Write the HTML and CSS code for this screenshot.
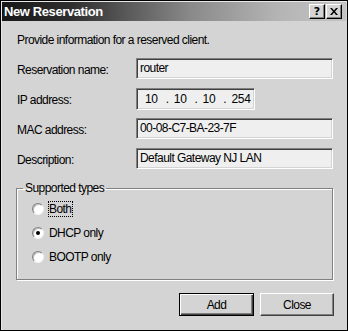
FILE: index.html
```html
<!DOCTYPE html>
<html lang="en">
<head>
    <meta charset="UTF-8">
    <title>New Reservation</title>
    <link rel="stylesheet" href="styles.css">
</head>
<body>
    <div class="window">
        <div class="title-bar">
            <div class="title-text">New Reservation</div>
            <div class="title-buttons">
                <span class="caption-btn">?</span>
                <span class="caption-btn close-btn">
                    <svg width="8" height="7" viewBox="0 0 8 7"><path d="M0 0h2l2 2.5L6 0h2L5 3.5 8 7H6L4 4.5 2 7H0l3-3.5z" fill="#000"/></svg>
                </span>
            </div>
        </div>

        <div class="content">
            <p class="intro">Provide information for a reserved client.</p>

            <div class="form-row">
                <span class="label">Reservation name:</span>
                <div class="field">router</div>
            </div>
            <div class="form-row">
                <span class="label">IP address:</span>
                <div class="field ip-field">
                    <span>10</span><span class="dot">.</span>
                    <span>10</span><span class="dot">.</span>
                    <span>10</span><span class="dot">.</span>
                    <span>254</span>
                </div>
            </div>
            <div class="form-row">
                <span class="label">MAC address:</span>
                <div class="field">00-08-C7-BA-23-7F</div>
            </div>
            <div class="form-row">
                <span class="label">Description:</span>
                <div class="field">Default Gateway NJ LAN</div>
            </div>

            <fieldset class="group">
                <legend>Supported types</legend>
                <div class="radio-row">
                    <span class="radio"></span>
                    <span class="radio-label focused">Both</span>
                </div>
                <div class="radio-row">
                    <span class="radio checked"></span>
                    <span class="radio-label">DHCP only</span>
                </div>
                <div class="radio-row">
                    <span class="radio"></span>
                    <span class="radio-label">BOOTP only</span>
                </div>
            </fieldset>

            <div class="actions">
                <span class="button default">Add</span>
                <span class="button">Close</span>
            </div>
        </div>
    </div>
</body>
</html>
```

FILE: styles.css
```css
:root {
    --face: #d4d4d4;
    --shadow: #808080;
    --dark: #404040;
    --light: #ffffff;
    --field-bg: #efefef;
}

body {
    margin: 0;
    font-family: "Liberation Sans", Arial, sans-serif;
    font-size: 12px;
    letter-spacing: -0.55px;
    color: #000;
    background: #fff;
}

.window {
    width: 348px;
    height: 331px;
    box-sizing: border-box;
    border: 1px solid #000;
    padding: 1px;
    background: var(--face);
    box-shadow: inset 1px 1px #e8e8e8;
}

.title-bar {
    height: 19px;
    display: flex;
    align-items: center;
    justify-content: space-between;
    padding: 0 4px 0 2px;
    background: linear-gradient(to right, #181818 0%, #2e2e2e 20%, #8a8a8a 55%, #b4b4b4 80%, #c4c4c4 100%);
}

.title-text {
    font-family: "Liberation Sans", Arial, sans-serif;
    font-weight: bold;
    font-size: 13px;
    letter-spacing: -0.4px;
    color: #fff;
}

.title-buttons {
    display: flex;
    gap: 1px;
}

.caption-btn {
    width: 14px;
    height: 13px;
    display: flex;
    align-items: center;
    justify-content: center;
    background: var(--face);
    border: 1px solid;
    border-color: var(--light) #000 #000 var(--light);
    box-shadow: inset -1px -1px var(--shadow);
    font-family: "DejaVu Sans", sans-serif;
    font-weight: bold;
    font-size: 11px;
    letter-spacing: 0;
    line-height: 1;
}

.content {
    padding: 12px 13px 0 14px;
}

.intro {
    margin: 0 0 11px 1px;
    line-height: 14px;
}

.form-row {
    display: flex;
    align-items: center;
    height: 21px;
    margin-bottom: 9px;
}

.label {
    width: 119px;
    padding-left: 1px;
    padding-top: 3px;
}

.field {
    flex: 1;
    height: 21px;
    box-sizing: border-box;
    padding: 2px 3px;
    line-height: 15px;
    background: var(--field-bg);
    border: 1px solid;
    border-color: var(--shadow) var(--light) var(--light) var(--shadow);
    box-shadow: inset 1px 1px var(--dark), inset -1px -1px var(--face);
}

.ip-field {
    flex: none;
    width: 119px;
    height: 22px;
    display: flex;
    padding: 3px 0 2px 8px;
    font-size: 12px;
    letter-spacing: -0.3px;
}

.dot {
    margin: 0 5px 0 8px;
}

.group {
    margin: 12px 0 0;
    padding: 2px 0 10px 15px;
    border: 1px solid var(--shadow);
    box-shadow: inset 1px 1px var(--light), 1px 1px var(--light);
    height: 99px;
    box-sizing: border-box;
}

.group legend {
    padding: 0 2px;
    margin-left: -9px;
    line-height: 14px;
}

.radio-row {
    display: flex;
    align-items: center;
    height: 24px;
}

.radio {
    width: 12px;
    height: 12px;
    box-sizing: border-box;
    border-radius: 50%;
    background: #fff;
    border: 1px solid;
    border-color: var(--shadow) #f4f4f4 #f4f4f4 var(--shadow);
    box-shadow: inset 1px 1px #c0c0c0;
    display: flex;
    align-items: center;
    justify-content: center;
    margin-right: 4px;
}

.radio.checked::after {
    content: "";
    width: 4px;
    height: 4px;
    border-radius: 50%;
    background: #000;
}

.radio-label {
    padding: 1px 1px;
}

.radio-label.focused {
    outline: 1px dotted #000;
    outline-offset: -1px;
}

.actions {
    display: flex;
    justify-content: flex-end;
    gap: 6px;
    margin: 13px -1px 0 0;
}

.button {
    width: 74px;
    height: 23px;
    box-sizing: border-box;
    display: flex;
    align-items: center;
    justify-content: center;
    background: var(--face);
    border: 1px solid;
    border-color: var(--light) var(--dark) var(--dark) var(--light);
    box-shadow: inset -1px -1px var(--shadow);
}

.button.default {
    width: 75px;
    border: 1px solid #000;
    box-shadow: inset 1px 1px var(--light), inset -1px -1px var(--dark), inset -2px -2px var(--shadow);
}
```
